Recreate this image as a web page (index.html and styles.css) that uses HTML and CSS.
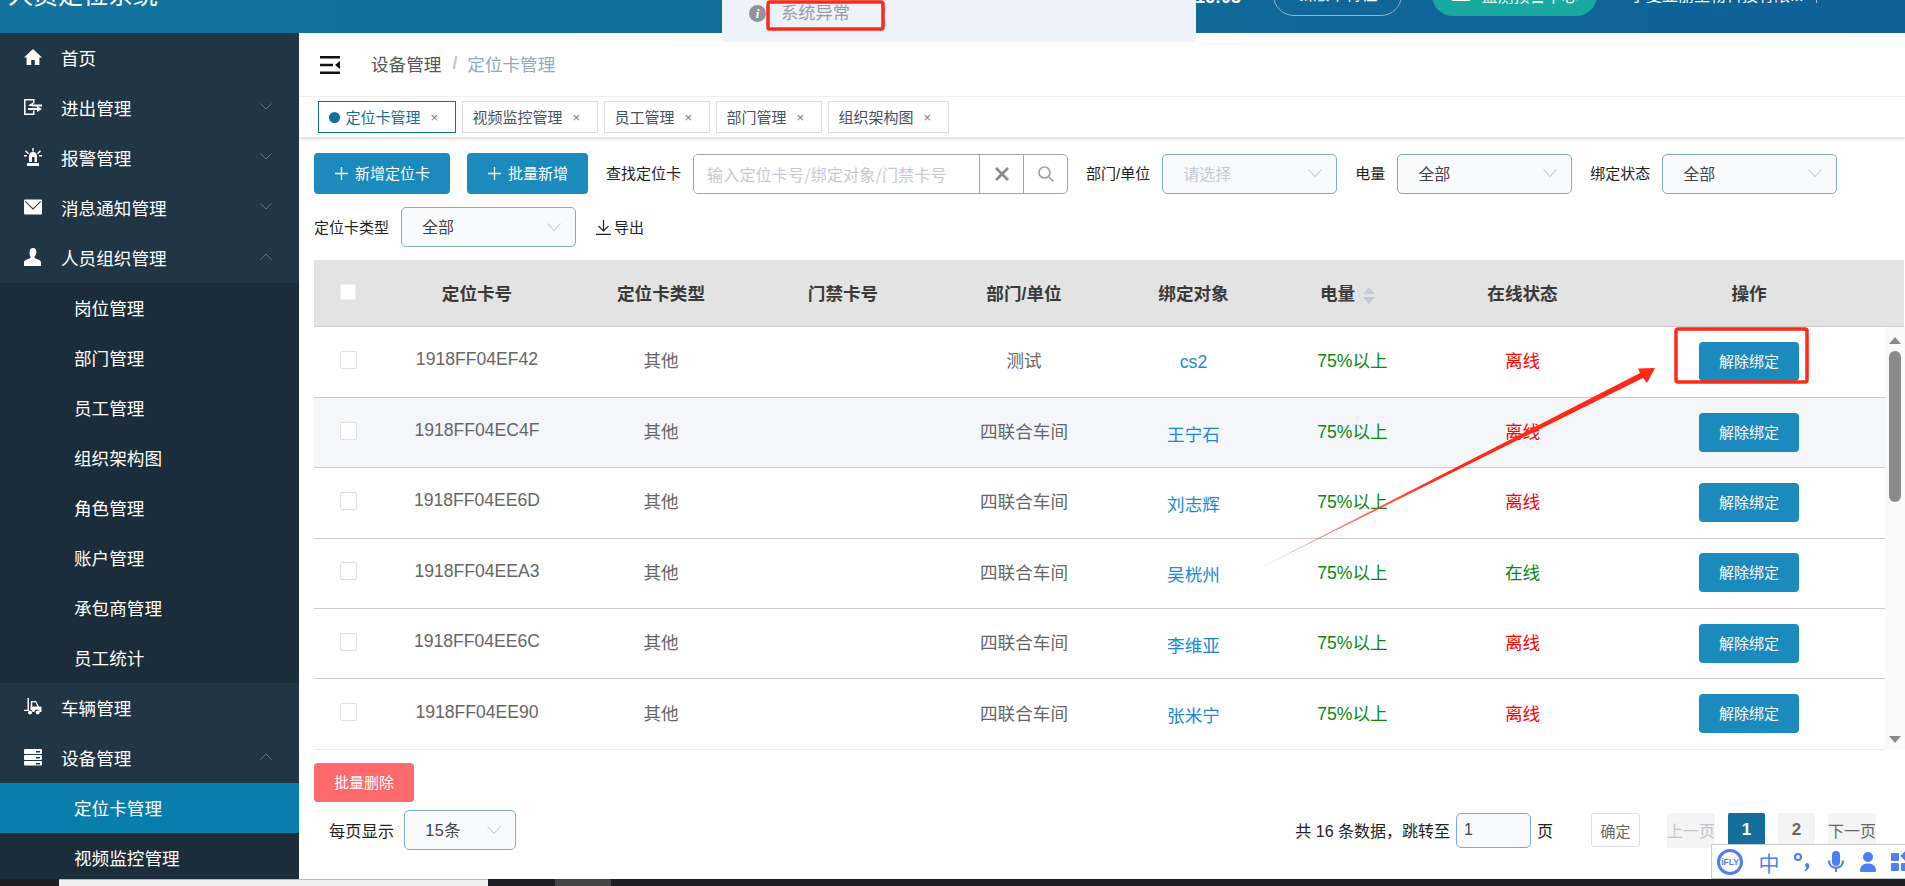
FILE: index.html
```html
<!DOCTYPE html>
<html lang="zh-CN">
<head>
<meta charset="utf-8">
<title>人员定位系统</title>
<link rel="stylesheet" href="styles.css">
</head>
<body>
<div class="app">
  <header class="topbar">
    <div class="brand">人员定位系统</div>
    <div class="clock">16:03</div>
    <div class="pill-outline">新版本特性</div>
    <div class="pill-green">
      <svg class="pill-ico" viewBox="0 0 20 20"><path d="M10 1a4 4 0 0 1 4 4c0 3-2 4-2 6 0 1 6 2 7 4v3H1v-3c1-2 7-3 7-4 0-2-2-3-2-6a4 4 0 0 1 4-4z"/></svg>
      <span>监测预警中心</span>
    </div>
    <div class="company">宁夏亚丽生物科技有限...</div>
    <div class="bar-sep"></div>
  </header>

  <div class="body">
    <aside class="side">
      <div class="menu-item">
        <svg class="ico" viewBox="0 0 18 18"><path d="M9 1 0 9.5h2.6V17h4.6v-5h3.6v5h4.6V9.5H18z"/></svg>
        <span>首页</span>
      </div>
      <div class="menu-item">
        <svg class="ico" viewBox="0 0 18 18"><path d="M0 1h10.500v4.500H9V2.600H1.600v12.800H9v-3h1.500V17H0z"/><path d="M4 7.500 9 4.500v2h9v2H9zM18 11l-5 3v-2H4v-2h9V8z"/></svg>
        <span>进出管理</span>
        <svg class="chev" viewBox="0 0 12 7"><path d="M.5.500 6 6 11.500.500"/></svg>
      </div>
      <div class="menu-item">
        <svg class="ico" viewBox="0 0 18 18"><path d="M5 14V8a4 4 0 0 1 8 0v6h-2.500V9H8v5zM3 15h12v3H3zM8.300 0h1.400v3.500H8.300zM1 3.200l1-1 3 3-1 1zM17 3.200l-1-1-3 3 1 1zM0 7h3v1.400H0zM15 7h3v1.400h-3z"/></svg>
        <span>报警管理</span>
        <svg class="chev" viewBox="0 0 12 7"><path d="M.5.500 6 6 11.500.500"/></svg>
      </div>
      <div class="menu-item">
        <svg class="ico" viewBox="0 0 18 18"><path d="M1 1.500h16a1 1 0 0 1 1 1v13a1 1 0 0 1-1 1H1a1 1 0 0 1-1-1v-13a1 1 0 0 1 1-1zm.6 1.500L9 10.200 16.400 3l.6.800L9 11.800 1 3.800z" fill-rule="evenodd"/></svg>
        <span>消息通知管理</span>
        <svg class="chev" viewBox="0 0 12 7"><path d="M.5.500 6 6 11.500.500"/></svg>
      </div>
      <div class="menu-item">
        <svg class="ico" viewBox="0 0 18 18"><path d="M9 0c2.200 0 3.400 1.700 3.400 3.800 0 2-.9 3.500-1.600 4.500-.5.800-.4 1.700.6 2.200 1.800.8 5.600 1.400 5.600 4V18H0v-3.500c0-2.600 3.800-3.200 5.600-4 1-.5 1.100-1.400.6-2.200C5.500 7.300 5.600 5.800 5.600 3.800 5.600 1.700 6.800 0 9 0z"/></svg>
        <span>人员组织管理</span>
        <svg class="chev" viewBox="0 0 12 7"><path d="M.5 6.500 6 1l5.500 5.500"/></svg>
      </div>
      <div class="submenu">
        <div class="sub-item">岗位管理</div>
        <div class="sub-item">部门管理</div>
        <div class="sub-item">员工管理</div>
        <div class="sub-item">组织架构图</div>
        <div class="sub-item">角色管理</div>
        <div class="sub-item">账户管理</div>
        <div class="sub-item">承包商管理</div>
        <div class="sub-item">员工统计</div>
      </div>
      <div class="menu-item">
        <svg class="ico" viewBox="0 0 18 18"><path d="M3.500 0H5v13H0v-1.200h3.500zM7 3h5l3 5.500h1.500a1 1 0 0 1 1 1V14h-2a2.500 2.500 0 0 0-5 0H8.500a2.500 2.500 0 0 0-2.200-2.500zm1.300 1.300v4.200h5.200l-2.200-4.200zM6 12.500a2 2 0 1 1 0 4 2 2 0 0 1 0-4zm7.700 0a2 2 0 1 1 0 4 2 2 0 0 1 0-4z" fill-rule="evenodd"/></svg>
        <span>车辆管理</span>
      </div>
      <div class="menu-item">
        <svg class="ico" viewBox="0 0 18 18"><path d="M1 1h16a1 1 0 0 1 1 1v3a1 1 0 0 1-1 1H1a1 1 0 0 1-1-1V2a1 1 0 0 1 1-1zm11 2v1.400h4V3zM1 7h16a1 1 0 0 1 1 1v3a1 1 0 0 1-1 1H1a1 1 0 0 1-1-1V8a1 1 0 0 1 1-1zm11 2v1.400h4V9zM1 13h16a1 1 0 0 1 1 1v2.500a1 1 0 0 1-1 1H1a1 1 0 0 1-1-1V14a1 1 0 0 1 1-1zm11 2v1.400h4V15z" fill-rule="evenodd"/></svg>
        <span>设备管理</span>
        <svg class="chev" viewBox="0 0 12 7"><path d="M.5 6.500 6 1l5.500 5.500"/></svg>
      </div>
      <div class="submenu">
        <div class="sub-item active">定位卡管理</div>
        <div class="sub-item">视频监控管理</div>
      </div>
    </aside>

    <main class="main">
      <div class="crumbs">
        <svg class="burger" viewBox="0 0 20 18"><path d="M0 0h20v2.500H0zM0 7.800h13v2.500H0zM0 15.500h20V18H0zM20 5v8l-5-4z"/></svg>
        <span class="crumb">设备管理</span>
        <span class="crumb-sep">/</span>
        <span class="crumb-now">定位卡管理</span>
      </div>

      <div class="tabs">
        <div class="tag tag-on"><i class="dot"></i>定位卡管理<span class="tag-x">×</span></div>
        <div class="tag">视频监控管理<span class="tag-x">×</span></div>
        <div class="tag">员工管理<span class="tag-x">×</span></div>
        <div class="tag">部门管理<span class="tag-x">×</span></div>
        <div class="tag">组织架构图<span class="tag-x">×</span></div>
      </div>

      <div class="toolbar">
        <button class="btn btn-add"><svg class="plus" viewBox="0 0 13 13"><path d="M6.500 0v13M0 6.500h13"/></svg>新增定位卡</button>
        <button class="btn btn-batch"><svg class="plus" viewBox="0 0 13 13"><path d="M6.500 0v13M0 6.500h13"/></svg>批量新增</button>
        <div class="field">
          <label class="lbl">查找定位卡</label>
          <div class="search">
            <input class="search-input" placeholder="输入定位卡号/绑定对象/门禁卡号">
            <span class="search-btn"><svg class="x-ico" viewBox="0 0 14 14"><path d="M1 1l12 12M13 1 1 13"/></svg></span>
            <span class="search-btn"><svg class="mag-ico" viewBox="0 0 16 16"><circle cx="6.500" cy="6.500" r="5.500"/><path d="M10.500 10.500 15.500 15.500"/></svg></span>
          </div>
        </div>
        <div class="field">
          <label class="lbl">部门/单位</label>
          <div class="select"><span class="ph">请选择</span><svg class="sel-chev" viewBox="0 0 14 8"><path d="M.5.500 7 7.500 13.500.500"/></svg></div>
        </div>
        <div class="field">
          <label class="lbl">电量</label>
          <div class="select"><span>全部</span><svg class="sel-chev" viewBox="0 0 14 8"><path d="M.5.500 7 7.500 13.500.500"/></svg></div>
        </div>
        <div class="field">
          <label class="lbl">绑定状态</label>
          <div class="select"><span>全部</span><svg class="sel-chev" viewBox="0 0 14 8"><path d="M.5.500 7 7.500 13.500.500"/></svg></div>
        </div>
        <div class="field">
          <label class="lbl">定位卡类型</label>
          <div class="select"><span>全部</span><svg class="sel-chev" viewBox="0 0 14 8"><path d="M.5.500 7 7.500 13.500.500"/></svg></div>
        </div>
        <div class="export"><svg class="exp-ico" viewBox="0 0 15 15"><path d="M7.500 0v10.500M2.500 6l5 5 5-5M0 14.300h15"/></svg><span class="exp-txt">导出</span></div>
      </div>

      <div class="thead-wrap">
        <table class="grid">
          <colgroup><col class="c1"><col class="c2"><col class="c3"><col class="c4"><col class="c5"><col class="c6"><col class="c7"><col class="c8"><col class="c9"></colgroup>
          <tr class="head-row">
            <th><i class="check check-head"></i></th>
            <th>定位卡号</th>
            <th>定位卡类型</th>
            <th>门禁卡号</th>
            <th>部门/单位</th>
            <th>绑定对象</th>
            <th>电量<span class="sort"><i class="sort-up"></i><i class="sort-down"></i></span></th>
            <th>在线状态</th>
            <th class="op">操作</th>
          </tr>
        </table>
      </div>

      <div class="tbody-wrap">
        <table class="grid">
          <colgroup><col class="c1"><col class="c2"><col class="c3"><col class="c4"><col class="c5"><col class="c6"><col class="c7"><col class="c8"><col class="c9"></colgroup>
          <tr>
            <td><i class="check"></i></td><td class="code">1918FF04EF42</td><td>其他</td><td></td><td>测试</td>
            <td class="name">cs2</td><td class="ok power">75%以上</td><td class="off">离线</td>
            <td class="op"><button class="btn btn-row">解除绑定</button></td>
          </tr>
          <tr class="row-hover">
            <td><i class="check"></i></td><td class="code">1918FF04EC4F</td><td>其他</td><td></td><td>四联合车间</td>
            <td class="name">王宁石</td><td class="ok power">75%以上</td><td class="off">离线</td>
            <td class="op"><button class="btn btn-row">解除绑定</button></td>
          </tr>
          <tr>
            <td><i class="check"></i></td><td class="code">1918FF04EE6D</td><td>其他</td><td></td><td>四联合车间</td>
            <td class="name">刘志辉</td><td class="ok power">75%以上</td><td class="off">离线</td>
            <td class="op"><button class="btn btn-row">解除绑定</button></td>
          </tr>
          <tr>
            <td><i class="check"></i></td><td class="code">1918FF04EEA3</td><td>其他</td><td></td><td>四联合车间</td>
            <td class="name">吴桄州</td><td class="ok power">75%以上</td><td class="ok">在线</td>
            <td class="op"><button class="btn btn-row">解除绑定</button></td>
          </tr>
          <tr>
            <td><i class="check"></i></td><td class="code">1918FF04EE6C</td><td>其他</td><td></td><td>四联合车间</td>
            <td class="name">李维亚</td><td class="ok power">75%以上</td><td class="off">离线</td>
            <td class="op"><button class="btn btn-row">解除绑定</button></td>
          </tr>
          <tr class="row-last">
            <td><i class="check"></i></td><td class="code">1918FF04EE90</td><td>其他</td><td></td><td>四联合车间</td>
            <td class="name">张米宁</td><td class="ok power">75%以上</td><td class="off">离线</td>
            <td class="op"><button class="btn btn-row">解除绑定</button></td>
          </tr>
        </table>
        <div class="vscroll">
          <i class="arr-up"></i>
          <i class="thumb"></i>
          <i class="arr-down"></i>
        </div>
      </div>

      <button class="btn btn-danger">批量删除</button>

      <div class="pager-row">
        <div class="per-page">
          <span>每页显示</span>
          <div class="select select-sm"><span class="size-txt">15条</span><svg class="sel-chev" viewBox="0 0 14 8"><path d="M.5.500 7 7.500 13.500.500"/></svg></div>
        </div>
        <div class="pager">
          <span class="total">共 16 条数据，跳转至</span>
          <input class="jump" value="1">
          <span class="page-word">页</span>
          <button class="confirm">确定</button>
          <span class="pg pg-txt pg-off">上一页</span>
          <span class="pg pg-num pg-cur">1</span>
          <span class="pg pg-num">2</span>
          <span class="pg pg-txt">下一页</span>
        </div>
      </div>
    </main>
  </div>

  <footer class="taskbar">
    <i class="task-light"></i>
    <i class="task-gray"></i>
  </footer>
</div>

<div class="toast">
  <span class="toast-i">i</span>
  <span class="toast-text">系统异常</span>
</div>

<svg class="annot" viewBox="0 0 1905 886">
  <defs>
    <linearGradient id="fade" gradientUnits="userSpaceOnUse" x1="1252" y1="572" x2="1440" y2="476">
      <stop offset="0" stop-color="#ff2a16" stop-opacity="0.3"/>
      <stop offset="1" stop-color="#ff2a16"/>
    </linearGradient>
  </defs>
  <rect class="annot-box" x="768" y="2" width="115" height="27" rx="2"/>
  <rect class="annot-box" x="1676" y="329" width="131" height="53" rx="2"/>
  <path fill="url(#fade)" d="M1252 572 1640 373 1638 368.500 1655 368 1647 383 1643 378z"/>
</svg>

<div class="ifly">
  <span class="ifly-logo">iFLY</span>
  <span class="ifly-zh">中</span>
  <svg class="ifly-ico" viewBox="0 0 20 22"><circle class="ifly-line" cx="5" cy="6" r="3"/><path d="M13.500 12a2.800 2.800 0 0 1 2.800 2.800c0 2.700-2 4.800-4.300 5.400l-.7-1.100c1.200-.6 1.900-1.400 2.100-2.400A2.800 2.800 0 0 1 13.500 12z"/></svg>
  <svg class="ifly-ico" viewBox="0 0 20 22"><rect x="6" y="0" width="8" height="15" rx="4"/><path class="ifly-line" d="M3 9.500c0 4.500 2.800 7.300 7 7.300s7-2.800 7-7.300"/><path d="M9 16.500h2V21H9z"/></svg>
  <svg class="ifly-ico" viewBox="0 0 20 22"><circle cx="10" cy="6" r="5"/><path d="M2 20c0-5 3-7.500 8-7.500s8 2.500 8 7.500c0 1-1 1-2 1H4c-1 0-2 0-2-1z"/></svg>
  <svg class="ifly-ico ifly-apps" viewBox="0 0 20 22"><rect x="0" y="2" width="8" height="8" rx="1"/><rect x="11" y="1" width="8" height="8" rx="1" transform="rotate(45 15 5)"/><rect x="0" y="12" width="8" height="8" rx="1"/><rect x="10" y="12" width="8" height="8" rx="1"/></svg>
</div>
</body>
</html>
```

FILE: styles.css
```css
* { box-sizing: border-box; }
html, body {
  margin: 0;
  height: 886px;
  overflow: hidden;
}
body {
  position: relative;
  font-family: "Liberation Sans", "Noto Sans CJK SC", sans-serif;
  font-size: 16px;
  color: #333;
  background: #fff;
}
.app {
  display: flex;
  flex-direction: column;
  height: 886px;
}

/* top bar, scrolled so only its lower part shows */
.topbar {
  height: 33px;
  flex: none;
  display: flex;
  align-items: flex-end;
  overflow: hidden;
  color: #fff;
  background: linear-gradient(90deg, #14729e 0%, #12709c 30%, #0f6097 100%);
}
.brand {
  font-size: 25px;
  line-height: 40px;
  margin: 0 0 18px 8px;
  width: 1187px;
  flex: none;
}
.clock {
  font-size: 18px;
  font-weight: bold;
  line-height: 24px;
  margin-bottom: 24.5px;
  width: 78px;
  flex: none;
}
.pill-outline {
  width: 129px;
  height: 42px;
  flex: none;
  margin-bottom: 17px;
  border: 1px solid #8fb4cc;
  border-radius: 21px;
  text-align: center;
  line-height: 40px;
}
.pill-green {
  width: 165px;
  height: 42px;
  flex: none;
  margin: 0 33px 17px 30px;
  background: #1aa9a0;
  border-radius: 21px;
  display: flex;
  align-items: center;
  justify-content: center;
  gap: 10px;
}
.pill-ico { width: 20px; height: 20px; margin-bottom: 4px; fill: #fff; }
.company {
  width: 186px;
  flex: none;
  line-height: 24px;
  margin-bottom: 25px;
  white-space: nowrap;
}
.bar-sep {
  width: 1px;
  height: 16px;
  margin-bottom: 30px;
  background: #9fc0d6;
  align-self: flex-end;
}

.body {
  flex: 1;
  display: flex;
  min-height: 0;
}

/* sidebar */
.side {
  width: 299px;
  flex: none;
  overflow: hidden;
  background: #213645;
  color: #fff;
  font-size: 17.6px;
}
.menu-item {
  height: 50px;
  display: flex;
  align-items: center;
  padding: 0 27px 1.5px 24px;
  gap: 19px;
}
.ico { width: 18px; height: 18px; flex: none; fill: #fff; }
.chev {
  width: 12px;
  height: 7px;
  margin: -2px 0 0 auto;
  fill: none;
  stroke: #5f7685;
  stroke-width: 1;
}
.submenu { background: #1b2d3a; }
.sub-item {
  height: 50px;
  line-height: 52px;
  padding-left: 74px;
}
.sub-item.active { background: #097dab; }

/* main column */
.main {
  flex: 1;
  min-width: 0;
  overflow: hidden;
  background: #fff;
}
.crumbs {
  height: 63px;
  display: flex;
  align-items: center;
  padding-left: 21px;
  font-size: 17.6px;
}
.burger { width: 20px; height: 18px; margin: 0 31px 0 0; fill: #111; }
.crumb { color: #555; margin-bottom: 3px; }
.crumb-sep { color: #c0c4cc; font-weight: bold; margin: 0 10px 3px 11px; }
.crumb-now { color: #97a8be; margin-bottom: 3px; }

.tabs {
  height: 41px;
  display: flex;
  gap: 6.5px;
  padding: 4px 0 0 19px;
  border-top: 1px solid #f0f0f0;
  box-shadow: 0 2px 3px rgba(0, 0, 21, .14);
  position: relative;
}
.tag {
  height: 32px;
  display: flex;
  align-items: center;
  padding: 0 0 2px 9.5px;
  border: 1px solid #d8dce5;
  font-size: 15px;
  color: #495060;
  white-space: nowrap;
}
.tag-on { border-color: #146f9a; color: #146f9a; }
.dot {
  width: 11px;
  height: 11px;
  margin: 2px 6px 0 0;
  border-radius: 50%;
  background: #146f9a;
}
.tag-x {
  width: 34px;
  padding: 2px 0 0 10px;
  font-size: 13px;
  color: #777;
}

/* toolbar */
.toolbar {
  display: flex;
  flex-wrap: wrap;
  align-items: center;
  gap: 13px 18px;
  padding: 16px 0 0 15px;
}
.btn {
  border: 0;
  border-radius: 4px;
  color: #fff;
  background: #1b8abc;
  font: inherit;
  font-size: 15px;
  padding: 0 0 2px;
}
.btn-add, .btn-batch {
  height: 41px;
  display: flex;
  align-items: center;
  gap: 7px;
  padding-left: 21px;
}
.btn-add { width: 136px; margin-right: -1px; }
.btn-batch { width: 121px; }
.plus { width: 13px; height: 13px; margin-top: 2px; fill: none; stroke: #fff; stroke-width: 1.3; }
.field {
  display: flex;
  align-items: center;
  gap: 12px;
}
.lbl { font-size: 15px; color: #222; padding-bottom: 2px; }
.search {
  width: 375px;
  height: 40px;
  display: flex;
  border: 1px solid #a5a5a5;
  border-radius: 5px;
  overflow: hidden;
}
.search-input {
  flex: 1;
  min-width: 0;
  border: 0;
  outline: 0;
  padding: 0 0 0 13px;
  font: 16px "Noto Sans CJK SC", sans-serif;
  letter-spacing: .2px;
}
.search-input::placeholder { color: #c5c9d2; }
.search-btn {
  width: 44px;
  flex: none;
  display: flex;
  align-items: center;
  justify-content: center;
  border-left: 1px solid #a5a5a5;
}
.x-ico { width: 14px; height: 14px; fill: none; stroke: #8a8a8a; stroke-width: 2.6; }
.mag-ico { width: 16px; height: 16px; fill: none; stroke: #a0a0a0; stroke-width: 1.6; }
.select {
  width: 175px;
  height: 40px;
  display: flex;
  align-items: center;
  justify-content: space-between;
  padding: 0 14px 0 20px;
  background: #f8fafc;
  border: 1px solid #7dabd3;
  border-radius: 5px;
  color: #444;
}
.select span { margin-top: -2px; }
.select .ph { color: #c5c9d2; }
.sel-chev { width: 14px; height: 8px; margin-top: -1px; fill: none; stroke: #c5cad3; stroke-width: 1.1; }
.select-sm { width: 112px; }
.size-txt { letter-spacing: .5px; }
.export {
  display: flex;
  align-items: center;
  gap: 3px;
  font-size: 15px;
  color: #222;
  margin-left: 2px;
}
.exp-txt { padding-bottom: 2px; }
.exp-ico { width: 15px; height: 15px; fill: none; stroke: #222; stroke-width: 1.2; }

/* table */
.thead-wrap {
  width: 1590px;
  margin: 13px 0 0 15px;
  background: #e3e3e3;
  border-bottom: 1px solid #ccc;
}
.grid {
  width: 1571px;
  table-layout: fixed;
  border-collapse: collapse;
  flex: none;
}
.c1 { width: 68px; }
.c2 { width: 190px; }
.c3 { width: 178px; }
.c4 { width: 186px; }
.c5 { width: 176px; }
.c6 { width: 163px; }
.c7 { width: 145px; }
.c8 { width: 205px; }
.c9 { width: 260px; }
.head-row { height: 66px; }
th {
  font-size: 17.6px;
  font-weight: bold;
  color: #3a3a3a;
  padding: 0 0 2px;
}
th.op, td.op { padding-right: 12px; }
td {
  height: 70.4px;
  padding: 0 0 4px;
  text-align: center;
  font-size: 17.6px;
  color: #666;
  border-bottom: 1px solid #ccc;
}
.row-hover td { background: #f5f6fa; }
.row-last td { border-bottom-color: #e9ebf2; }
td.name { color: #1b88d8; padding-top: 5px; }
td.ok { color: #078a0e; }
td.power { padding-left: 10px; }
td.off { color: #f00; }
.check {
  display: block;
  width: 17px;
  height: 18px;
  margin: 0 auto;
  background: #fff;
  border: 1px solid #dcdfe6;
  border-radius: 2px;
}
.check-head { width: 16px; height: 16px; border-color: #eef0f5; }
.btn-row { width: 100px; height: 39px; display: block; margin: 3px auto 0; }
.sort {
  display: inline-flex;
  flex-direction: column;
  gap: 3px;
  margin-left: 8px;
  vertical-align: 6px;
}
.sort-up, .sort-down {
  width: 0;
  height: 0;
  border-left: 6px solid transparent;
  border-right: 6px solid transparent;
}
.sort-up { border-bottom: 7px solid #c3cbd6; }
.sort-down { border-top: 7px solid #c3cbd6; }

.tbody-wrap {
  display: flex;
  width: 1591px;
  margin-left: 15px;
  height: 422px;
}
.vscroll {
  width: 20px;
  flex: none;
  display: flex;
  flex-direction: column;
  align-items: center;
  padding: 10px 0 6px;
  background: #fafafa;
}
.arr-up, .arr-down {
  width: 0;
  height: 0;
  border-left: 6.5px solid transparent;
  border-right: 6.5px solid transparent;
}
.arr-up { border-bottom: 7px solid #8a8a8a; }
.arr-down { border-top: 7px solid #8a8a8a; margin-top: auto; }
.thumb {
  width: 12px;
  height: 151px;
  margin-top: 7px;
  border-radius: 6px;
  background: #8a8a8a;
}

.btn-danger {
  display: block;
  width: 100px;
  height: 39px;
  margin: 14px 0 0 15px;
  background: #ff6a6c;
}
.pager-row {
  display: flex;
  align-items: center;
  justify-content: space-between;
  margin: 8px 29px 0 30px;
}
.per-page {
  display: flex;
  align-items: center;
  gap: 10px;
  font-size: 16.3px;
  color: #222;
}
.pager {
  display: flex;
  align-items: center;
}
.total { color: #222; }
.jump {
  width: 75px;
  height: 35px;
  margin: 0 6px 0 6px;
  padding: 0 0 0 7px;
  background: #f8fafc;
  border: 1px solid #7dabd3;
  border-radius: 5px;
  font: 16px "Liberation Sans", sans-serif;
  color: #444;
  outline: 0;
}
.page-word { color: #222; }
.confirm {
  width: 49px;
  height: 34px;
  margin: 0 27px 0 38px;
  padding: 0;
  background: #fff;
  border: 1px solid #dcdfe6;
  border-radius: 3px;
  font: inherit;
  font-size: 15px;
  color: #666;
}
.pg {
  height: 35px;
  margin-left: 13px;
  display: flex;
  align-items: center;
  justify-content: center;
  background: #f4f4f5;
  border-radius: 2px;
  color: #666;
}
.pg-off { margin-left: 0; color: #c0c4cc; }
.pg-txt { width: 48px; white-space: nowrap; }
.pg-num { width: 37px; font-size: 17px; font-weight: bold; }
.pg-cur { background: #146f9a; color: #fff; }

/* bottom strip of the desktop */
.taskbar {
  height: 7px;
  flex: none;
  display: flex;
  background: #1e1e23;
}
.task-light {
  width: 429px;
  margin-left: 59px;
  background: #efefef;
  border-top: 1px solid #bbb;
}
.task-gray {
  width: 56px;
  margin-left: 67px;
  background: #444;
}

/* overlays */
.toast {
  position: absolute;
  left: 722px;
  top: 0;
  width: 474px;
  height: 42px;
  display: flex;
  align-items: flex-start;
  gap: 15px;
  padding: 2px 0 0 27px;
  background: #edf2fc;
  border-radius: 0 0 4px 4px;
}
.toast-i {
  width: 17px;
  height: 17px;
  margin-top: 3px;
  border-radius: 50%;
  background: #909399;
  color: #fff;
  font: italic bold 13px/17px "Liberation Serif", serif;
  text-align: center;
}
.toast-text { font-size: 17.3px; line-height: 22px; color: #9a9ca3; }
.annot {
  position: absolute;
  left: 0;
  top: 0;
  width: 1905px;
  height: 886px;
  pointer-events: none;
}
.annot-box { fill: none; stroke: #ff2a16; stroke-width: 3.5; }
.ifly {
  position: absolute;
  left: 1711px;
  top: 844px;
  width: 194px;
  height: 35px;
  display: flex;
  align-items: center;
  padding-left: 5px;
  background: #fff;
  border: 1px solid #ccc;
  border-right: 0;
  overflow: hidden;
  color: #4f7ff5;
}
.ifly-logo {
  width: 26px;
  height: 26px;
  flex: none;
  border: 3px solid #4f7ff5;
  border-radius: 50%;
  font: bold 8.5px/20px "Liberation Sans", sans-serif;
  text-align: center;
}
.ifly-zh {
  width: 22px;
  flex: none;
  margin: 0 13px 0 15px;
  font: 21px/24px "Noto Sans CJK SC", sans-serif;
  text-align: center;
}
.ifly-ico {
  width: 20px;
  height: 22px;
  flex: none;
  margin-right: 12.5px;
  fill: #4f7ff5;
}
.ifly-line { fill: none; stroke: #4f7ff5; stroke-width: 2.2; }
.ifly-apps { margin-right: 0; }
```
